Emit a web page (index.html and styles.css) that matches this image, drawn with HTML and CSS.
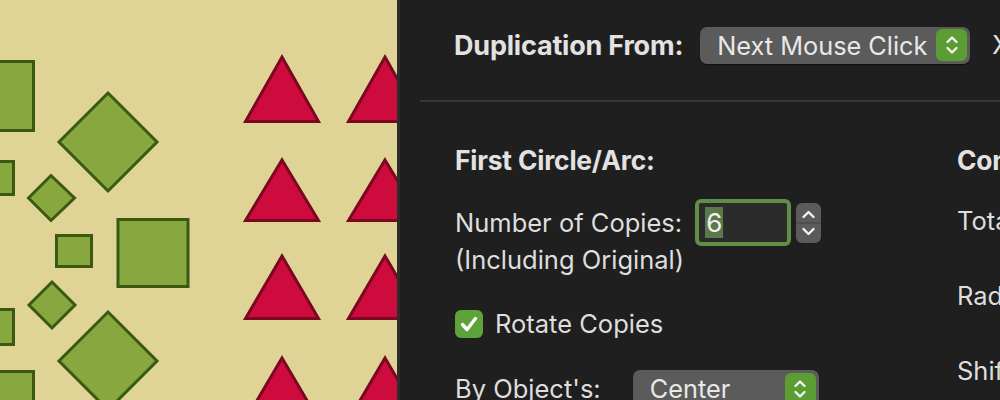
FILE: index.html
```html
<!DOCTYPE html>
<html lang="en">
<head>
<meta charset="utf-8">
<title>Duplicate</title>
<link rel="stylesheet" href="styles.css">
</head>
<body>
<div class="app">
  <div class="canvas">
    <svg class="art" width="397" height="400" viewBox="0 0 397 400">
      <g class="sq">
        <rect x="-36" y="61.5" width="69.5" height="69"/>
        <polygon points="108,93 157,142 108,191 59,142"/>
        <rect x="-20" y="161.5" width="33.5" height="33"/>
        <polygon points="51,175.5 74.5,198 51,220.5 28.5,198"/>
        <rect x="56.5" y="235.5" width="35" height="31"/>
        <rect x="118" y="219.5" width="70" height="67"/>
        <polygon points="52,282 75,305 52,328 29,305"/>
        <rect x="-20" y="309.5" width="33.5" height="35"/>
        <polygon points="108,312 157,361 108,410 59,361"/>
        <rect x="-36" y="371.5" width="69.5" height="69"/>
      </g>
      <g class="tri">
        <polygon points="282,57 318.5,121.5 245.5,121.5"/>
        <polygon points="385,57 421.5,121.5 348.5,121.5"/>
        <polygon points="282,160 318.5,220.5 245.5,220.5"/>
        <polygon points="385,160 421.5,220.5 348.5,220.5"/>
        <polygon points="282,256 318.5,318.5 245.5,318.5"/>
        <polygon points="385,256 421.5,318.5 348.5,318.5"/>
        <polygon points="282,358 318.5,420 245.5,420"/>
        <polygon points="385,358 421.5,420 348.5,420"/>
      </g>
    </svg>
  </div>
  <div class="panel">
    <div class="header">
      <span class="title">Duplication From:</span>
      <div class="popup popup-wide">
        <span class="popup-text">Next Mouse Click</span>
        <span class="popup-btn">
          <svg width="16" height="24" viewBox="0 0 16 24"><path d="M3.5 9 L8 4.5 L12.5 9 M3.5 15 L8 19.5 L12.5 15"/></svg>
        </span>
      </div>
      <span class="close">X</span>
    </div>
    <div class="divider"></div>
    <div class="columns">
      <div class="col-left">
        <div class="section-title">First Circle/Arc:</div>
        <div class="row copies-row">
          <span class="label">Number of Copies:</span>
          <div class="field"><span class="field-inner"><span class="sel">6</span></span></div>
          <div class="stepper">
            <svg width="25" height="40" viewBox="0 0 25 40"><path d="M7.5 14 L12.5 9 L17.5 14 M7.5 26 L12.5 31 L17.5 26"/><line x1="0" y1="20" x2="25" y2="20"/></svg>
          </div>
        </div>
        <div class="label sub">(Including Original)</div>
        <div class="row check-row">
          <span class="checkbox">
            <svg width="28" height="28" viewBox="0 0 28 28"><path d="M7.5 14.5 L12 19.5 L20.5 8.5"/></svg>
          </span>
          <span class="label">Rotate Copies</span>
        </div>
        <div class="row object-row">
          <span class="label">By Object's:</span>
          <div class="popup popup-center">
            <span class="popup-text">Center</span>
            <span class="popup-btn">
              <svg width="16" height="24" viewBox="0 0 16 24"><path d="M3.5 9 L8 4.5 L12.5 9 M3.5 15 L8 19.5 L12.5 15"/></svg>
            </span>
          </div>
        </div>
      </div>
      <div class="col-right">
        <div class="section-title">Concentric Circles:</div>
        <div class="label r1">Total Circles:</div>
        <div class="label r2">Radius Increment:</div>
        <div class="label r3">Shift Copies:</div>
      </div>
    </div>
  </div>
</div>
</body>
</html>
```
FILE: styles.css
```css
html, body {
  margin: 0;
  padding: 0;
  width: 1000px;
  height: 400px;
  overflow: hidden;
  background: #1e1e1e;
}
.app {
  display: flex;
  width: 1000px;
  height: 400px;
  font-family: Inter, "Noto Sans", sans-serif;
  color: #e2e2e2;
}
.canvas {
  width: 397px;
  height: 400px;
  flex: none;
  background: #dfd395;
  border-right: 3px solid #2c2c2a;
  overflow: hidden;
}
.art { display: block; }
.sq rect, .sq polygon {
  fill: #86a83e;
  stroke: #3b5912;
  stroke-width: 3;
}
.tri polygon {
  fill: #cd0b3c;
  stroke: #7a0822;
  stroke-width: 3;
  stroke-linejoin: miter;
}
.panel {
  flex: 1;
  min-width: 0;
  background: #1f1f1f;
  overflow: hidden;
}
.header {
  display: flex;
  align-items: center;
  height: 90px;
  padding-left: 54px;
  white-space: nowrap;
}
.title {
  flex: none;
  font-weight: 700;
  font-size: 27px;
  letter-spacing: -0.2px;
  margin-right: 17px;
}
.popup {
  flex: none;
  display: flex;
  align-items: center;
  height: 37px;
  background: #5b5b5b;
  border-radius: 7px;
  box-shadow: 0 1px 1px rgba(0,0,0,0.5);
  box-sizing: border-box;
  padding: 0 3px 0 17px;
}
.popup-wide { width: 270px; }
.popup-center { width: 186px; padding-left: 17px; }
.popup-text {
  flex: 1;
  font-size: 25.3px;
  color: #e8e8e8;
}
.popup-btn {
  flex: none;
  width: 31px;
  height: 32px;
  border-radius: 6px;
  background: #5c9d33;
  display: flex;
  align-items: center;
  justify-content: center;
}
.popup-btn svg path, .stepper svg path {
  fill: none;
  stroke: #f2f2f2;
  stroke-width: 2.4;
  stroke-linecap: round;
  stroke-linejoin: round;
}
.close {
  flex: none;
  margin-left: 22px;
  font-size: 25px;
  color: #e2e2e2;
}
.divider {
  margin-left: 20px;
  margin-top: 10px;
  height: 2px;
  background: #363636;
}
.columns {
  display: flex;
  padding-left: 55px;
  padding-top: 43px;
  white-space: nowrap;
}
.col-left { width: 502px; flex: none; }
.col-right { flex: none; }
.section-title {
  font-weight: 700;
  font-size: 26.4px;
  line-height: 30px;
  letter-spacing: -0.2px;
}
.label {
  font-size: 25.5px;
  line-height: 30px;
  color: #dedede;
}
.row { display: flex; align-items: center; }
.copies-row { margin-top: 24px; }
.field {
  flex: none;
  margin-left: 13px;
  width: 96px;
  height: 47px;
  box-sizing: border-box;
  border: 4px solid #5f8e47;
  border-radius: 6px;
  background: #2b2b2b;
  padding: 3px 6px;
}
.field-inner {
  display: block;
  font-size: 26px;
  line-height: 33px;
  color: #f0f0f0;
}
.sel {
  background: #5b7a4b;
  padding: 0 1px;
}
.stepper {
  flex: none;
  margin-left: 5px;
  width: 25px;
  height: 40px;
  border-radius: 6px;
  background: #5b5b5b;
}
.stepper svg { display: block; }
.stepper svg line { stroke: #454545; stroke-width: 1; }
.sub { margin-top: -1px; }
.check-row { margin-top: 34px; }
.checkbox {
  flex: none;
  width: 28px;
  height: 28px;
  border-radius: 6px;
  background: #5ea339;
  margin-right: 12px;
}
.checkbox svg { display: block; }
.checkbox svg path {
  fill: none;
  stroke: #ffffff;
  stroke-width: 3.4;
  stroke-linecap: round;
  stroke-linejoin: round;
}
.object-row { margin-top: 31px; }
.object-row .popup { margin-left: 32px; }
.r1 { margin-top: 31px; }
.r2 { margin-top: 45px; }
.r3 { margin-top: 45px; }
```
